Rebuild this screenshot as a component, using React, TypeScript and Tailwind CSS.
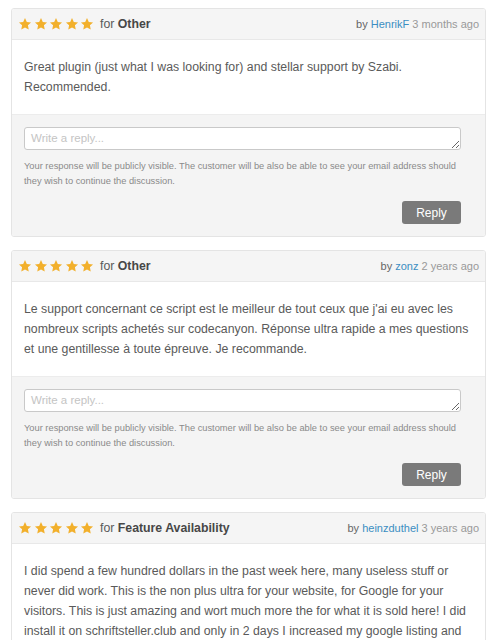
import React from "react";

type Review = {
  category: string;
  author: string;
  when: string;
  text: string;
  reply?: boolean;
};

const REVIEWS: Review[] = [
  {
    category: "Other",
    author: "HenrikF",
    when: "3 months ago",
    text: "Great plugin (just what I was looking for) and stellar support by Szabi. Recommended.",
    reply: true,
  },
  {
    category: "Other",
    author: "zonz",
    when: "2 years ago",
    text: "Le support concernant ce script est le meilleur de tout ceux que j'ai eu avec les nombreux scripts achetés sur codecanyon. Réponse ultra rapide a mes questions et une gentillesse à toute épreuve. Je recommande.",
    reply: true,
  },
  {
    category: "Feature Availability",
    author: "heinzduthel",
    when: "3 years ago",
    text: "I did spend a few hundred dollars in the past week here, many useless stuff or never did work. This is the non plus ultra for your website, for Google for your visitors. This is just amazing and wort much more the for what it is sold here! I did install it on schriftsteller.club and only in 2 days I increased my google listing and traffic.",
    reply: true,
  },
];

function Star() {
  return (
    <svg viewBox="0 0 24 24" className="w-[14px] h-[14px]" fill="#f2b02c">
      <path d="M12 1.8l3.1 6.6 7.2.9-5.3 5 1.4 7.1L12 17.9l-6.4 3.5 1.4-7.1-5.3-5 7.2-.9z" />
    </svg>
  );
}

function ReviewCard({ r }: { r: Review }) {
  return (
    <div className="border border-[#e4e4e4] rounded-[3px] overflow-hidden">
      <div className="h-[31px] bg-[#f5f5f5] border-b border-[#e8e8e8] flex items-center justify-between px-[6px]">
        <div className="flex items-center">
          <div className="flex items-center gap-[1.5px]">
            <Star />
            <Star />
            <Star />
            <Star />
            <Star />
          </div>
          <span className="ml-[6px] text-[12.3px] text-[#5a5a5a]">
            for <b className="text-[#474747] font-bold">{r.category}</b>
          </span>
        </div>
        <div className="text-[11px]">
          <span className="text-[#666]">by </span>
          <span className="text-[#3b8ec2]">{r.author}</span>
          <span className="text-[#999]"> {r.when}</span>
        </div>
      </div>
      <div className="bg-white px-[12px] pt-[17px] pb-[17px] text-[12.3px] leading-[20px] text-[#5a5a5a]">
        {r.text}
      </div>
      {r.reply && (
        <div className="bg-[#f4f4f4] border-t border-[#ececec] pl-[12px] pr-[24px] pt-[12px] pb-[12px]">
          <textarea
            rows={1}
            placeholder="Write a reply..."
            className="block w-full h-[23px] border border-[#c9c9c9] rounded-[3px] bg-white px-[6px] py-[2px] text-[11.5px] leading-[16px] text-[#555] placeholder:text-[#c4c4c4] resize-y"
          />
          <p className="mt-[9px] text-[9.3px] leading-[15px] text-[#8a8a8a]">
            Your response will be publicly visible. The customer will be also be able to see your email address should they wish to continue the discussion.
          </p>
          <div className="flex justify-end mt-[12px]">
            <button className="w-[59px] h-[23px] rounded-[3px] bg-[#7a7a7a] text-white text-[12px]">
              Reply
            </button>
          </div>
        </div>
      )}
    </div>
  );
}

export default function App() {
  return (
    <div
      className="bg-white min-h-screen pl-[11px] pr-[17px] pt-[8px] flex flex-col gap-[13px]"
      style={{ fontFamily: '"Liberation Sans", Arial, sans-serif' }}
    >
      {REVIEWS.map((r, i) => (
        <ReviewCard key={i} r={r} />
      ))}
    </div>
  );
}
